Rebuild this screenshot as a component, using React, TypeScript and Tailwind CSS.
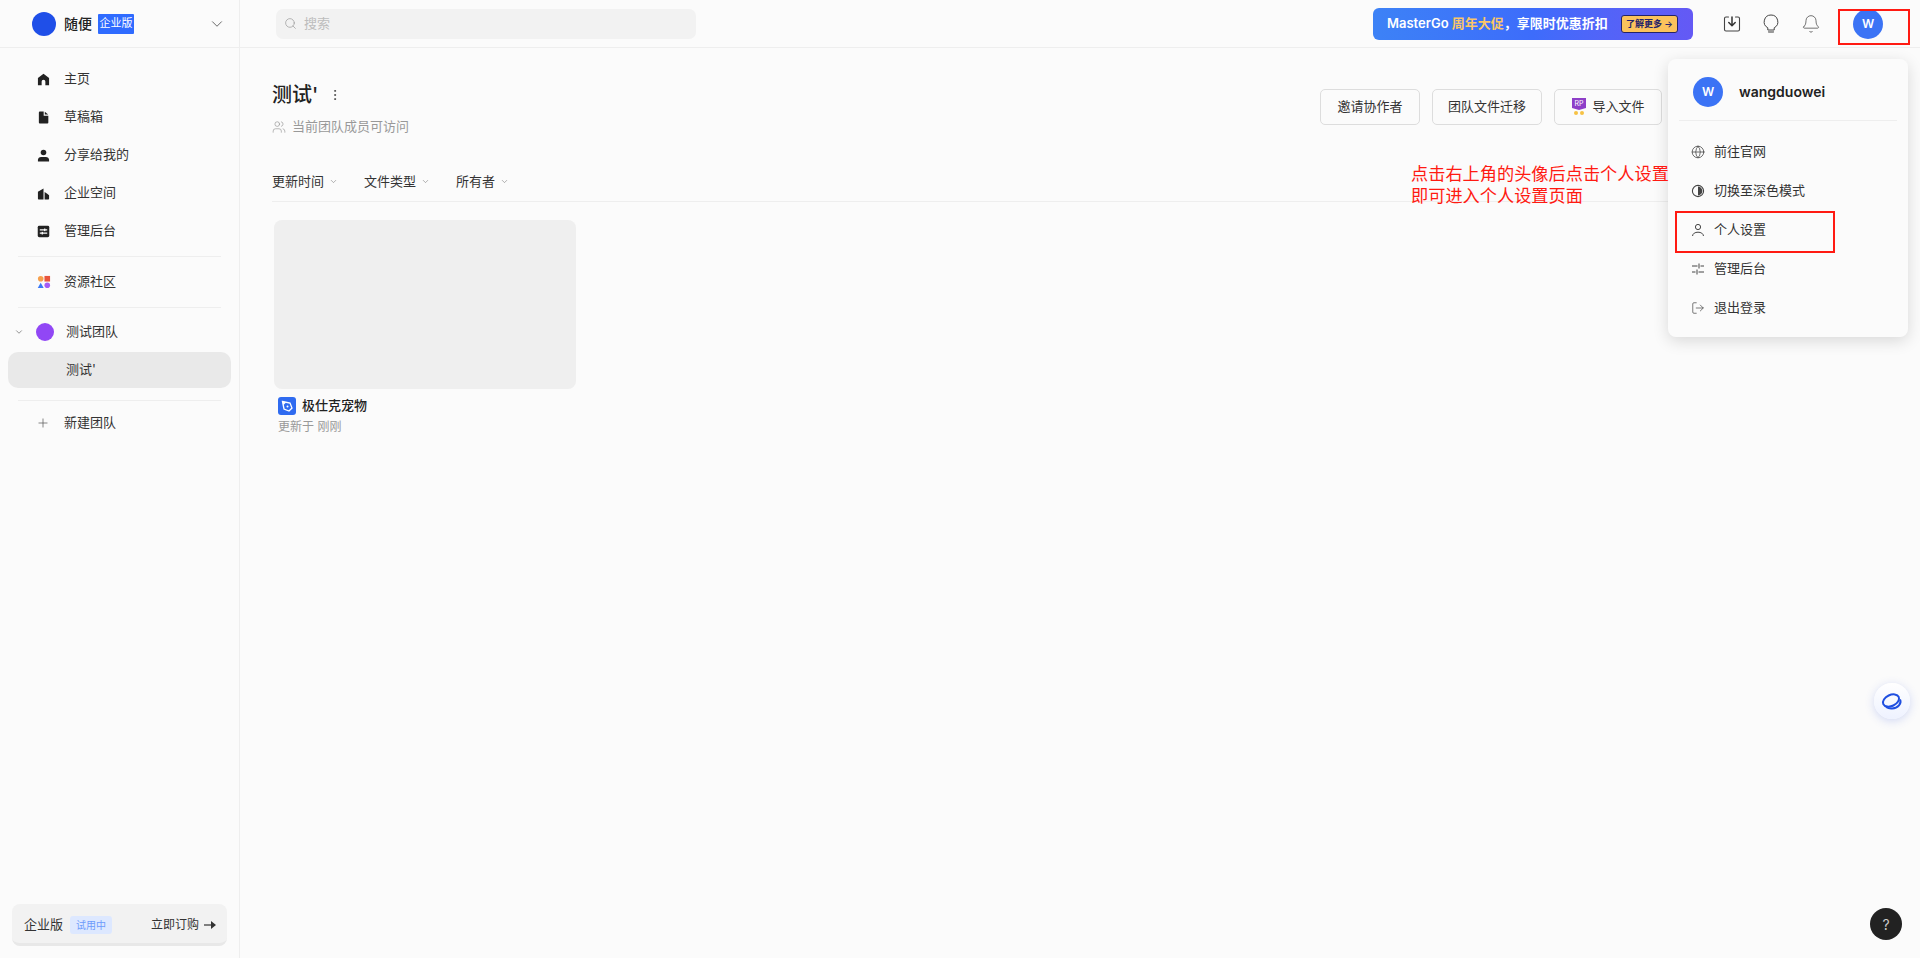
import React from 'react';
import {ChevronDown, Search, Globe, LogOut, Plus, Users, Bell, EllipsisVertical} from 'lucide-react';

const font = {fontFamily: 'Inter, "Noto Sans CJK SC", sans-serif'};

const HomeIcon = () => (
    <svg width="13" height="13" viewBox="0 0 14 14" fill="#222"><path d="M7 .8 13 5.4V13.2H9V9.2A2 2 0 0 0 5 9.2V13.2H1V5.4Z"/></svg>
);
const DraftIcon = () => (
    <svg width="13" height="13" viewBox="0 0 14 14" fill="#222"><path d="M2 1.500A1 1 0 0 1 3 .5H7.200V5H12.200V12.500A1 1 0 0 1 11.200 13.500H3A1 1 0 0 1 2 12.500Z"/><path d="M8.400.8 12 3.900H8.400Z"/></svg>
);
const PersonIcon = () => (
    <svg width="13" height="13" viewBox="0 0 14 14" fill="#222"><circle cx="7" cy="3.800" r="3"/><path d="M1 13.400V11.600C1 9.800 2.600 8.600 4.400 8.600H9.600C11.400 8.600 13 9.800 13 11.600V13.400Z"/></svg>
);
const BuildingIcon = () => (
    <svg width="13" height="13" viewBox="0 0 14 14" fill="#222"><path d="M1 5.200 7 1.600V13.400H1.800A.8.8 0 0 1 1 12.600Z"/><path d="M8.200 5.400 11 7.400 13 9V12.600A.8.8 0 0 1 12.200 13.400H8.200Z"/></svg>
);
const AdminIcon = () => (
    <svg width="13" height="13" viewBox="0 0 14 14"><rect x=".8" y=".8" width="12.400" height="12.400" rx="1.600" fill="#222"/><path d="M3 5.200H11M3 8.800H11" stroke="#fbfbfb" strokeWidth="1.200"/><rect x="7.600" y="3.800" width="1.400" height="2.800" fill="#fbfbfb"/><rect x="5" y="7.400" width="1.400" height="2.800" fill="#fbfbfb"/></svg>
);
const CommunityIcon = () => (
    <svg width="14" height="14" viewBox="0 0 15 15"><circle cx="4" cy="4" r="3" fill="#f6a04d"/><rect x="8" y="1" width="6" height="6" fill="#e8553d"/><path d="M4 8.200 7.200 14H.8Z" fill="#3b78f6"/><circle cx="11" cy="11" r="3" fill="#a55cf5"/></svg>
);
const ContrastIcon = () => (
    <svg width="14" height="14" viewBox="0 0 14 14"><circle cx="7" cy="7" r="5.600" fill="none" stroke="#444" strokeWidth="1.100"/><path d="M7 2.600A4.400 4.400 0 0 1 7 11.400Z" fill="#444"/></svg>
);
const SliderIcon = () => (
    <svg width="14" height="14" viewBox="0 0 14 14" fill="none" stroke="#444" strokeWidth="1"><path d="M1 4H6.500M9.500 4H13M1 10H4.500M7.500 10H13M8 1.500V6.500M6 7.500V12.500"/></svg>
);
const UserOutline = () => (
    <svg width="14" height="14" viewBox="0 0 14 14" fill="none" stroke="#444" strokeWidth="1"><circle cx="7" cy="4" r="2.600"/><path d="M1.500 13C1.800 10.500 4 9.200 7 9.200S12.200 10.500 12.500 13"/></svg>
);
const DownloadIcon = () => (
    <svg width="18" height="18" viewBox="0 0 18 18" fill="none" stroke="#444" strokeWidth="1.100" strokeLinecap="round" strokeLinejoin="round"><path d="M5.500 2H3A1.500 1.500 0 0 0 1.500 3.500V14.500A1.500 1.500 0 0 0 3 16H15A1.500 1.500 0 0 0 16.500 14.500V3.500A1.500 1.500 0 0 0 15 2H12.500"/><path d="M9 2V10.500M5.800 7.500 9 10.800 12.200 7.500" strokeWidth="1.500" stroke="#333"/></svg>
);
const BulbIcon = () => (
    <svg width="16" height="20" viewBox="0 0 16 20" fill="none" stroke="#444" strokeWidth="1"><path d="M8 1A6.800 6.800 0 0 0 4.800 13.800V16H11.200V13.800A6.800 6.800 0 0 0 8 1Z"/><path d="M5 16.500H11V18.200A.8.8 0 0 1 10.200 19H5.800A.8.8 0 0 1 5 18.200Z" fill="#999" stroke="none"/></svg>
);
const PenIcon = () => (
    <svg width="18" height="18" viewBox="0 0 18 18"><rect width="18" height="18" rx="3" fill="#2f6bf0"/><path d="M4.500 4.500 12 6 14 11 11 14 6 12Z" fill="none" stroke="#fff" strokeWidth="1.300"/><path d="M4 4 8 5.500 5.500 8Z" fill="#fff"/><circle cx="9.500" cy="9.500" r="1" fill="#fff"/></svg>
);
const SparkIcon = () => (
    <svg width="26" height="26" viewBox="0 0 26 26" fill="none" stroke="#1f4fe0" strokeWidth="2"><ellipse cx="12" cy="12.500" rx="8.500" ry="5.500" transform="rotate(-25 12 12.500)"/><path d="M21 11.500C23 15.500 19 20 13 20.500 10.500 20.700 8.500 20 7 19"/></svg>
);
const ImportBadge = () => (
    <svg width="16" height="18" viewBox="0 0 16 18"><path d="M1 0H15V10L8 12 1 10Z" fill="#8e3fc8"/><circle cx="5" cy="15" r="2" fill="#f6c244"/><circle cx="11" cy="15" r="2" fill="#f6c244"/><text x="8" y="8" textAnchor="middle" fontSize="7" fill="#fff" fontFamily="Inter">RP</text></svg>
);

const navItems = [
    {label: '主页', icon: <HomeIcon/>},
    {label: '草稿箱', icon: <DraftIcon/>},
    {label: '分享给我的', icon: <PersonIcon/>},
    {label: '企业空间', icon: <BuildingIcon/>},
    {label: '管理后台', icon: <AdminIcon/>},
];

const menuItems = [
    {label: '前往官网', icon: <Globe size={14} strokeWidth={1.3} color="#444"/>},
    {label: '切换至深色模式', icon: <ContrastIcon/>},
    {label: '个人设置', icon: <UserOutline/>},
    {label: '管理后台', icon: <SliderIcon/>},
    {label: '退出登录', icon: <LogOut size={14} strokeWidth={1.2} color="#444"/>},
];

const Sidebar = () => (
    <aside className="w-[240px] h-full shrink-0 border-r border-[#eeeeee] flex flex-col">
        <div className="h-[48px] shrink-0 border-b border-[#eeeeee] flex items-center pl-[32px] pr-[13px]">
            <div className="w-[24px] h-[24px] rounded-full bg-[#1f4fe8]"/>
            <span className="ml-[8px] text-[14px] font-medium text-[#222]">随便</span>
            <span className="ml-[6px] w-[36px] h-[20px] rounded-[1px] bg-[#2f6bff] text-white text-[11px] flex items-center justify-center">企业版</span>
            <ChevronDown size={18} strokeWidth={1.3} color="#666" className="ml-auto"/>
        </div>
        <nav className="pt-[12px]">
            {navItems.map((item) => (
                <div key={item.label} className="h-[38px] flex items-center pl-[37px] text-[13px] text-[#333]">
                    <span className="w-[27px] flex">{item.icon}</span>
                    {item.label}
                </div>
            ))}
        </nav>
        <div className="mx-[18px] mt-[6px] border-t border-[#eeeeee]"/>
        <div className="h-[50px] flex items-center pl-[37px] text-[13px] text-[#333]">
            <span className="w-[27px] flex"><CommunityIcon/></span>
            资源社区
        </div>
        <div className="mx-[18px] border-t border-[#eeeeee]"/>
        <div className="h-[44px] pt-[4px] flex items-center pl-[14px] text-[13px] text-[#333]">
            <ChevronDown size={10} strokeWidth={1.5} color="#555"/>
            <div className="ml-[12px] w-[18px] h-[18px] rounded-full bg-[#9147f5]"/>
            <span className="ml-[12px]">测试团队</span>
        </div>
        <div className="mx-[8px] h-[36px] rounded-[10px] bg-[#e9e9e9] flex items-center pl-[58px] text-[13px] text-[#333]">测试'</div>
        <div className="mx-[18px] mt-[12px] border-t border-[#eeeeee]"/>
        <div className="h-[44px] flex items-center pl-[36px] text-[13px] text-[#333]">
            <span className="w-[28px] flex"><Plus size={14} strokeWidth={1.2} color="#555"/></span>
            新建团队
        </div>
        <div className="mt-auto mx-[12px] mb-[12px] h-[42px] pt-[3px] rounded-[8px] bg-[#f2f2f2] border-b-[3px] border-[#e8e8e8] flex items-center pl-[12px] pr-[11px] text-[13px] text-[#333]">
            企业版
            <span className="ml-[7px] w-[42px] h-[18px] rounded-[3px] bg-[#dde8ff] text-[#6d9bfb] text-[10px] flex items-center justify-center">试用中</span>
            <span className="ml-auto text-[12px]">立即订购</span>
            <svg className="ml-[5px]" width="12" height="10" viewBox="0 0 12 10" fill="#333"><path d="M0 4.400H7V5.600H0Z"/><path d="M7 1 12 5 7 9Z"/></svg>
        </div>
    </aside>
);

const Header = () => (
    <header className="h-[48px] shrink-0 border-b border-[#eeeeee] flex items-center pl-[36px]">
        <div className="w-[420px] h-[30px] rounded-[7px] bg-[#f2f2f2] flex items-center pl-[8px] text-[13px] text-[#bdbdbd]">
            <Search size={13} strokeWidth={1.3} color="#999"/>
            <span className="ml-[7px]">搜索</span>
        </div>
        <div className="ml-auto w-[320px] h-[32px] rounded-[6px] bg-gradient-to-r from-[#3d82f6] via-[#3d6cfb] to-[#6459f5] flex items-center pl-[14px] text-[13px] font-semibold text-white">
            MasterGo&nbsp;<span className="text-[#fbc668]">周年大促</span>，享限时优惠折扣
            <span className="ml-[13px] w-[57px] h-[18px] rounded-[3px] bg-[#fbc25c] border border-[#23236a] text-[#23236a] text-[9px] flex items-center justify-center">了解更多 →</span>
        </div>
        <div className="ml-[30px] flex items-center gap-[22px]">
            <DownloadIcon/>
            <BulbIcon/>
            <Bell size={20} strokeWidth={0.9} color="#444"/>
        </div>
        <div className="ml-[32px] mr-[37px] w-[30px] h-[30px] rounded-full bg-[#3b73f5] text-white text-[12px] font-semibold flex items-center justify-center">W</div>
    </header>
);

const Popup = () => (
    <div className="absolute left-[1668px] top-[59px] w-[240px] h-[278px] rounded-[8px] bg-[#fbfbfb] shadow-[0_4px_16px_rgba(0,0,0,0.14)] px-[11px]">
        <div className="h-[62px] pt-[4px] border-b border-[#eeeeee] flex items-center pl-[14px]">
            <div className="w-[30px] h-[30px] rounded-full bg-[#3b73f5] text-white text-[12px] font-semibold flex items-center justify-center">W</div>
            <span className="ml-[16px] text-[14px] font-semibold text-[#222]">wangduowei</span>
        </div>
        <div className="pt-[11px]">
            {menuItems.map((item) => (
                <div key={item.label} className="h-[39px] flex items-center pl-[12px] text-[13px] text-[#333]">
                    <span className="w-[23px] flex">{item.icon}</span>
                    {item.label}
                </div>
            ))}
        </div>
    </div>
);

const Content = () => (
    <main className="flex-1 pl-[32px] pr-[28px]">
        <div className="flex items-start justify-between h-[114px]">
            <div className="pt-[33px]">
                <div className="flex items-center text-[20px] font-medium text-[#222] leading-[28px]">
                    测试'
                    <EllipsisVertical size={14} strokeWidth={1.5} color="#444" className="ml-[10px]"/>
                </div>
                <div className="mt-[8px] flex items-center text-[13px] text-[#999]">
                    <Users size={14} strokeWidth={1} color="#888" className="mr-[6px]"/>
                    当前团队成员可访问
                </div>
            </div>
            <div className="flex gap-[12px] pt-[41px] pr-[230px] text-[13px] text-[#333]">
                <button className="h-[36px] w-[100px] rounded-[5px] border border-[#dddddd]">邀请协作者</button>
                <button className="h-[36px] w-[110px] rounded-[5px] border border-[#dddddd]">团队文件迁移</button>
                <button className="h-[36px] w-[108px] rounded-[5px] border border-[#dddddd] flex items-center justify-center gap-[5px]"><ImportBadge/>导入文件</button>
            </div>
        </div>
        <div className="h-[40px] border-b border-[#eeeeee] flex items-center gap-[26px] text-[13px] text-[#333]">
            <span className="flex items-center gap-[5px]">更新时间<ChevronDown size={9} strokeWidth={1.500} color="#777"/></span>
            <span className="flex items-center gap-[5px]">文件类型<ChevronDown size={9} strokeWidth={1.500} color="#777"/></span>
            <span className="flex items-center gap-[5px]">所有者<ChevronDown size={9} strokeWidth={1.500} color="#777"/></span>
        </div>
        <div className="mt-[18px] ml-[2px] w-[302px]">
            <div className="h-[169px] rounded-[8px] bg-[#efefef]"/>
            <div className="mt-[7px] ml-[4px] flex items-center gap-[6px] text-[13px] font-medium text-[#222]">
                <PenIcon/>
                极仕克宠物
            </div>
            <div className="mt-[2px] ml-[4px] text-[12px] text-[#999]">更新于 刚刚</div>
        </div>
    </main>
);

const App = () => {
    return (
        <div className="relative flex w-full h-screen overflow-hidden bg-[#fbfbfb]" style={font}>
            <Sidebar/>
            <div className="flex-1 flex flex-col min-w-0">
                <Header/>
                <Content/>
            </div>
            <Popup/>
            <div className="absolute left-[1838px] top-[9px] w-[72px] h-[36px] border-2 border-[#ff1a12]"/>
            <div className="absolute left-[1675px] top-[211px] w-[160px] h-[42px] border-2 border-[#ff1a12]"/>
            <div className="absolute left-[1411px] top-[163px] text-[17.2px] leading-[22px] text-[#ff1a12]">点击右上角的头像后点击个人设置<br/>即可进入个人设置页面</div>
            <div className="absolute left-[1874px] top-[683px] w-[36px] h-[36px] rounded-full bg-gradient-to-b from-white to-[#eef2ff] shadow-[0_2px_10px_rgba(60,90,220,0.22)] flex items-center justify-center"><SparkIcon/></div>
            <div className="absolute left-[1870px] top-[908px] w-[32px] h-[32px] rounded-full bg-[#222] text-[#ccc] text-[14px] flex items-center justify-center">?</div>
        </div>
    );
};

export default App;
